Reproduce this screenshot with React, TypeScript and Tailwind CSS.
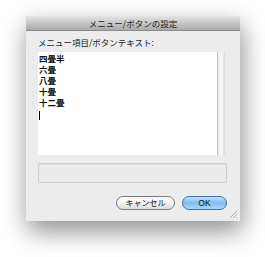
const jp = { fontFamily: '"Noto Sans CJK JP", "Liberation Sans", sans-serif' };

const items = ['四畳半', '六畳', '八畳', '十畳', '十二畳'];

function Grip() {
  return (
    <svg width="9" height="9" viewBox="0 0 9 9" className="absolute right-[2px] bottom-[2px]">
      <path d="M8 1 L1 8 M8 4 L4 8 M8 7 L7 8" stroke="#9a9a9a" strokeWidth="0.8" />
      <path d="M8.5 2 L2 8.5 M8.5 5 L5 8.5" stroke="#ffffff" strokeWidth="0.6" />
    </svg>
  );
}

export default function App() {
  return (
    <div className="w-[265px] h-[257px] bg-white overflow-hidden" style={jp}>
      <div className="relative ml-[26px] mt-[16px] w-[214px] h-[205px] bg-[#ececec] flex flex-col shadow-[2px_10px_24px_rgba(0,0,0,0.45)]">
        {/* title bar */}
        <div className="h-[15px] bg-gradient-to-b from-[#e4e4e4] to-[#a9a9a9] border-b border-[#8c8c8c] flex items-center justify-center text-[8.5px] text-[#222] leading-none">
          メニュー/ボタンの設定
        </div>

        <div className="flex flex-col px-[12px] pr-[13px]">
          <div className="mt-[6px] text-[8.5px] leading-[10px] text-[#222]">メニュー項目/ボタンテキスト:</div>

          {/* text area */}
          <div className="mt-[5px] h-[103px] w-[187px] flex">
            <div className="flex-1 bg-white pl-[1px] pt-[1px] text-[8.5px] font-semibold text-[#111] leading-[11px]">
              {items.map((t) => (
                <div key={t}>{t}</div>
              ))}
              <div className="mt-[3px] w-px h-[9px] bg-black" />
            </div>
            <div className="w-[8px] border-l border-[#c4c4c4] bg-gradient-to-r from-[#e8e8e8] via-[#fafafa] to-[#d9d9d9]" />
          </div>

          {/* disabled field */}
          <div className="mt-[8px] h-[20px] w-[189px] rounded-[2px] border border-[#cfcfcf] bg-[#ebebeb] shadow-[inset_0_1px_0_#e0e0e0]" />

          {/* buttons */}
          <div className="mt-[13px] flex justify-end gap-[7px]">
            <button className="w-[59px] h-[14px] rounded-full border border-[#7d7d7d] bg-gradient-to-b from-[#ffffff] via-[#f2f2f2] to-[#dcdcdc] text-[8px] leading-none text-[#111] flex items-center justify-center">
              キャンセル
            </button>
            <button className="w-[45px] h-[14px] rounded-full border border-[#4a6fa0] bg-gradient-to-b from-[#bfe0fb] via-[#7fbcf0] to-[#a9d8fb] text-[8.5px] leading-none text-[#111] flex items-center justify-center" style={{ fontFamily: '"Liberation Sans", sans-serif' }}>
              OK
            </button>
          </div>
        </div>
        <Grip />
      </div>
    </div>
  );
}
